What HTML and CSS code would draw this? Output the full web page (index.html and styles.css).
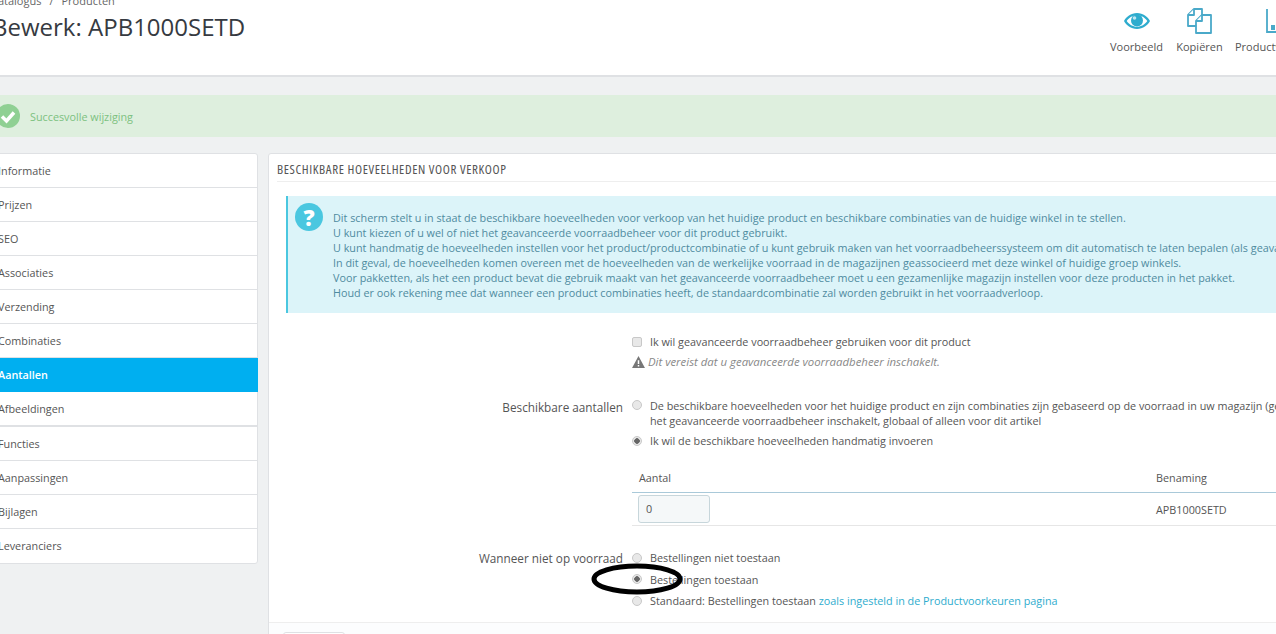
FILE: index.html
```html
<!DOCTYPE html>
<html lang="nl">
  <head>
    <meta charset="UTF-8">
    <title>Bewerk: APB1000SETD</title>
    <link rel="stylesheet" href="styles.css">
  </head>
  <body>
    <div class="page">
      <header class="page-head">
        <div class="head-left">
          <div class="breadcrumb"><span>Catalogus</span><span class="sep">/</span><span>Producten</span></div>
          <h1 class="page-title">Bewerk: APB1000SETD</h1>
        </div>
        <div class="toolbar">
          <a class="tool">
            <svg class="tool-icon" viewBox="0 0 28 24"><path fill="#2eacce" fill-rule="evenodd" d="M14 4C8 4 3 8 1 12c2 4 7 8 13 8s11-4 13-8c-2-4-7-8-13-8zm0 2.2c-4.300 0-8 2.400-10.300 5.800 2.300 3.400 6 5.800 10.300 5.800s8-2.400 10.300-5.800C22 8.600 18.300 6.200 14 6.200z"/><circle cx="14" cy="11.500" r="6" fill="#2eacce"/><circle cx="11.500" cy="9" r="1.800" fill="#bfe6f1"/></svg>
            <span>Voorbeeld</span>
          </a>
          <a class="tool">
            <svg class="tool-icon" viewBox="0 0 28 26"><g fill="#fff" stroke="#4aa9c9" stroke-width="1.800" stroke-linejoin="round"><path d="M2 7l6-6h8v17H2z"/><path d="M8 1v6H2"/><path d="M10 13l6-6h9v18H10z"/><path d="M16 7v6h-6"/></g></svg>
            <span>Kopiëren</span>
          </a>
          <a class="tool tool-last">
            <svg class="tool-icon" viewBox="0 0 28 26"><path fill="none" stroke="#4aa9c9" stroke-width="1.800" d="M2 1v23h24"/><path fill="#4aa9c9" d="M6 17h4v5H6zM12 12h4v10h-4zM18 15h4v7h-4z"/></svg>
            <span>Productverkopen</span>
          </a>
        </div>
      </header>

      <main class="content">
        <div class="alert-success">
          <span class="check-badge"><svg viewBox="0 0 24 24"><path fill="none" stroke="#fff" stroke-width="3.500" d="M6 12.500l4.500 4.500L18 8.500"/></svg></span>
          Succesvolle wijziging
        </div>

        <div class="columns">
          <nav class="side-tabs">
            <a class="tab">Informatie</a>
            <a class="tab">Prijzen</a>
            <a class="tab">SEO</a>
            <a class="tab">Associaties</a>
            <a class="tab">Verzending</a>
            <a class="tab">Combinaties</a>
            <a class="tab active">Aantallen</a>
            <a class="tab tab-split">Afbeeldingen</a>
            <a class="tab">Functies</a>
            <a class="tab">Aanpassingen</a>
            <a class="tab">Bijlagen</a>
            <a class="tab">Leveranciers</a>
          </nav>

          <section class="panel">
            <h3 class="panel-title">Beschikbare hoeveelheden voor verkoop</h3>

            <div class="alert-info">
              <span class="help-badge">?</span>
              <p>
                Dit scherm stelt u in staat de beschikbare hoeveelheden voor verkoop van het huidige product en beschikbare combinaties van de huidige winkel in te stellen.<br>
                U kunt kiezen of u wel of niet het geavanceerde voorraadbeheer voor dit product gebruikt.<br>
                U kunt handmatig de hoeveelheden instellen voor het product/productcombinatie of u kunt gebruik maken van het voorraadbeheerssysteem om dit automatisch te laten bepalen (als geavanceerd voorraadbeheer is ingeschakeld).<br>
                In dit geval, de hoeveelheden komen overeen met de hoeveelheden van de werkelijke voorraad in de magazijnen geassocieerd met deze winkel of huidige groep winkels.<br>
                Voor pakketten, als het een product bevat die gebruik maakt van het geavanceerde voorraadbeheer moet u een gezamenlijke magazijn instellen voor deze producten in het pakket.<br>
                Houd er ook rekening mee dat wanneer een product combinaties heeft, de standaardcombinatie zal worden gebruikt in het voorraadverloop.
              </p>
            </div>

            <div class="form-row row-advanced">
              <div class="form-label"></div>
              <div class="form-field">
                <div class="option"><span class="checkbox"></span><span>Ik wil geavanceerde voorraadbeheer gebruiken voor dit product</span></div>
                <div class="warn-line">
                  <svg class="warn-icon" viewBox="0 0 14 13"><path fill="#777" fill-rule="evenodd" d="M7 0l7 13H0zM6.200 4.500v4.300h1.600V4.500zm0 5.200v1.600h1.600V9.700z"/></svg>
                  <em>Dit vereist dat u geavanceerde voorraadbeheer inschakelt.</em>
                </div>
              </div>
            </div>

            <div class="form-row row-quantities">
              <div class="form-label">Beschikbare aantallen</div>
              <div class="form-field">
                <div class="option option-top"><span class="radio"></span><span>De beschikbare hoeveelheden voor het huidige product en zijn combinaties zijn gebaseerd op de voorraad in uw magazijn (geavanceerd voorraadbeheer),<br>het geavanceerde voorraadbeheer inschakelt, globaal of alleen voor dit artikel</span></div>
                <div class="option option-manual"><span class="radio checked"></span><span>Ik wil de beschikbare hoeveelheden handmatig invoeren</span></div>
                <div class="qty-table">
                  <div class="qty-head"><span class="qty-col">Aantal</span><span>Benaming</span></div>
                  <div class="qty-row"><span class="qty-col"><span class="qty-input">0</span></span><span>APB1000SETD</span></div>
                </div>
              </div>
            </div>

            <div class="form-row row-stock">
              <div class="form-label">Wanneer niet op voorraad</div>
              <div class="form-field stock-options">
                <div class="option"><span class="radio"></span><span>Bestellingen niet toestaan</span></div>
                <div class="option"><span class="radio checked"></span><span>Bestellingen toestaan</span></div>
                <div class="option"><span class="radio"></span><span>Standaard: Bestellingen toestaan <a class="link">zoals ingesteld in de Productvoorkeuren pagina</a></span></div>
              </div>
            </div>

            <div class="panel-footer"><button class="btn-cancel">Annuleren</button></div>
          </section>
        </div>
      </main>
    </div>
    <svg class="scribble" viewBox="0 0 96 34"><ellipse cx="47" cy="17" rx="43" ry="13" fill="none" stroke="#000" stroke-width="5"/></svg>
  </body>
</html>
```

FILE: styles.css
```css
html, body {
    margin: 0;
    height: 634px;
    overflow: hidden;
}

body {
    font-family: 'Open Sans', sans-serif;
    font-size: 10.8px;
    color: #555;
    background: #eff1f2;
    position: relative;
}

.page {
    width: 1600px;
    margin-left: -12px;
    margin-top: -6px;
}

.page-head {
    height: 83px;
    box-sizing: border-box;
    background: #fff;
    border-bottom: 2px solid #dfe1e4;
    display: flex;
    width: 1288px;
    overflow: hidden;
}

.head-left {
    width: 1117px;
    flex: none;
}

.breadcrumb {
    font-size: 11px;
    line-height: 14px;
    color: #666;
    padding-left: 3px;
}

.sep {
    margin: 0 8px;
}

.page-title {
    margin: 3px 0 0;
    padding-left: 4px;
    font-size: 24px;
    line-height: 32px;
    font-weight: 400;
    color: #363a41;
}

.toolbar {
    display: flex;
    padding-top: 14px;
    flex: none;
}

.tool {
    width: 63px;
    flex: none;
    display: flex;
    flex-direction: column;
    align-items: center;
    color: #555;
    font-size: 11px;
}

.tool-last {
    width: auto;
    margin-left: 4px;
}

.tool span {
    margin-top: 5px;
    line-height: 16px;
    white-space: nowrap;
}

.tool-icon {
    width: 28px;
    height: 26px;
}

.content {
    padding: 18px 0 0 0;
    width: 1600px;
}

.alert-success {
    height: 42px;
    background: #deefde;
    color: #7cc17f;
    display: flex;
    align-items: center;
    gap: 10px;
    padding-left: 8px;
}

.check-badge {
    width: 24px;
    height: 24px;
    border-radius: 50%;
    background: #8fd093;
    display: block;
}

.columns {
    display: flex;
    align-items: flex-start;
    gap: 10px;
    margin-top: 16px;
}

.side-tabs {
    width: 270px;
    flex: none;
    background: #fff;
    border: 1px solid #dfe1e4;
    border-radius: 3px;
    box-sizing: border-box;
}

.tab {
    display: block;
    height: 34px;
    box-sizing: border-box;
    line-height: 33px;
    padding-left: 9px;
    color: #555;
    border-bottom: 1px solid #dfe1e4;
}

.tab:last-child {
    border-bottom: 0;
}

.tab.active {
    background: #00aff0;
    color: #fff;
    font-weight: 600;
    border-bottom: 0;
    margin-right: -1px;
}

.tab-split {
    height: 35px;
    border-bottom-width: 2px;
}

.panel {
    width: 1300px;
    background: #fff;
    border: 1px solid #dfe1e4;
    border-radius: 3px;
    box-sizing: border-box;
    padding: 0 8px;
    height: 500px;
}

.panel-title {
    margin: 0;
    height: 27px;
    line-height: 30px;
    font-size: 13px;
    letter-spacing: 0.6px;
    font-weight: 400;
    font-stretch: condensed;
    text-transform: uppercase;
    color: #555;
    border-bottom: 1px solid #eee;
}

.alert-info {
    margin: 14px 0 0 9px;
    height: 117px;
    box-sizing: border-box;
    background: #dcf4f9;
    border-left: 2px solid #4ac7e0;
    display: flex;
    color: #4f8ba0;
}

.help-badge {
    width: 28px;
    height: 28px;
    flex: none;
    margin: 7px 0 0 7px;
    border-radius: 50%;
    background: #4ac7e0;
    color: #fff;
    font-size: 22px;
    font-weight: 800;
    line-height: 28px;
    text-align: center;
}

.alert-info p {
    margin: 14px 0 0 10px;
    line-height: 15px;
    white-space: nowrap;
}

.form-row {
    display: flex;
}

.form-label {
    width: 355px;
    flex: none;
    text-align: right;
    padding-right: 9px;
    box-sizing: border-box;
    font-size: 11.75px;
    line-height: 16px;
}

.row-quantities .form-label {
    margin-top: 1px;
}

.form-field {
    flex: 1;
}

.option {
    display: flex;
    align-items: center;
    line-height: 15px;
    white-space: nowrap;
}

.option-top {
    align-items: flex-start;
}

.checkbox, .radio {
    width: 10px;
    height: 10px;
    flex: none;
    margin-right: 8px;
    box-sizing: border-box;
    border: 1px solid #c8c8c8;
    background: #e8e8e8;
}

.checkbox {
    border-radius: 2px;
}

.radio {
    border-radius: 50%;
}

.radio.checked {
    background: radial-gradient(circle, #666 0 2.500px, #e8e8e8 3px);
}

.option-top .radio {
    margin-top: 2px;
}

.row-advanced {
    margin-top: 21px;
}

.warn-line {
    display: flex;
    align-items: center;
    gap: 3px;
    margin-top: 5px;
    color: #888;
    font-size: 11.4px;
    line-height: 15px;
}

.warn-icon {
    width: 13px;
    height: 12px;
}

.row-quantities {
    margin-top: 29px;
}

.option-manual {
    margin-top: 5px;
}

.qty-table {
    margin-top: 22px;
}

.qty-head {
    display: flex;
    height: 22px;
    line-height: 16px;
    border-bottom: 1px solid #a9c9d9;
}

.qty-col {
    width: 524px;
    padding-left: 7px;
    box-sizing: border-box;
    flex: none;
}

.qty-row {
    display: flex;
    align-items: center;
    height: 33px;
    box-sizing: border-box;
    border-bottom: 1px solid #e6e6e6;
}

.qty-input {
    display: block;
    margin-left: -1px;
    width: 72px;
    height: 28px;
    line-height: 26px;
    box-sizing: border-box;
    padding-left: 7px;
    background: #f5f8f9;
    border: 1px solid #c7d6db;
    border-radius: 3px;
}

.row-stock {
    margin-top: 24px;
}

.stock-options {
    display: flex;
    flex-direction: column;
    gap: 6.5px;
}

.link {
    color: #2eacce;
}

.panel-footer {
    margin: 14px -8px 0;
    background: #fcfdfe;
    border-top: 1px solid #eee;
    padding: 9px 14px;
}

.btn-cancel {
    width: 62px;
    height: 30px;
    background: #fff;
    border: 1px solid #dfe1e4;
    border-radius: 3px;
    font: 11px 'Open Sans', sans-serif;
}

.scribble {
    position: absolute;
    left: 590px;
    top: 562px;
    width: 96px;
    height: 34px;
}
```
